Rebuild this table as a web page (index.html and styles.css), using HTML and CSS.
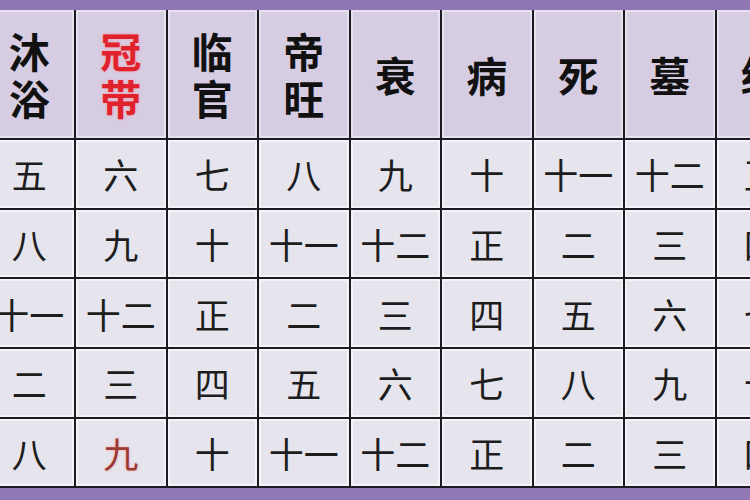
FILE: index.html
```html
<!DOCTYPE html>
<html lang="zh">
<head>
<meta charset="utf-8">
<title>十二长生表</title>
<link rel="stylesheet" href="styles.css">
</head>
<body>
<div class="band"></div>
<div class="grid">
  <div class="cell head">沐<br>浴</div>
  <div class="cell head red">冠<br>带</div>
  <div class="cell head">临<br>官</div>
  <div class="cell head">帝<br>旺</div>
  <div class="cell head">衰</div>
  <div class="cell head">病</div>
  <div class="cell head">死</div>
  <div class="cell head">墓</div>
  <div class="cell head">绝</div>

  <div class="cell">五</div><div class="cell">六</div><div class="cell">七</div><div class="cell">八</div><div class="cell">九</div><div class="cell">十</div><div class="cell">十一</div><div class="cell">十二</div><div class="cell">正</div>

  <div class="cell">八</div><div class="cell">九</div><div class="cell">十</div><div class="cell">十一</div><div class="cell">十二</div><div class="cell">正</div><div class="cell">二</div><div class="cell">三</div><div class="cell">四</div>

  <div class="cell">十一</div><div class="cell">十二</div><div class="cell">正</div><div class="cell">二</div><div class="cell">三</div><div class="cell">四</div><div class="cell">五</div><div class="cell">六</div><div class="cell">七</div>

  <div class="cell">二</div><div class="cell">三</div><div class="cell">四</div><div class="cell">五</div><div class="cell">六</div><div class="cell">七</div><div class="cell">八</div><div class="cell">九</div><div class="cell">十</div>

  <div class="cell">八</div><div class="cell red-soft">九</div><div class="cell">十</div><div class="cell">十一</div><div class="cell">十二</div><div class="cell">正</div><div class="cell">二</div><div class="cell">三</div><div class="cell">四</div>
</div>
</body>
</html>
```
FILE: styles.css
```css
html, body {
  margin: 0;
  padding: 0;
}
body {
  width: 750px;
  height: 500px;
  overflow: hidden;
  background: #9179b6;
  font-family: "Noto Sans CJK SC", "Noto Sans CJK TC", sans-serif;
}
.band {
  height: 10px;
  background: #8f76b5;
}
.grid {
  display: grid;
  grid-template-columns: repeat(9, 89.5px);
  grid-template-rows: 128px repeat(5, 67.7px);
  gap: 2px;
  margin-left: -15.5px;
  width: max-content;
  padding-bottom: 2px;
  background: #1e1a24;
}
.cell {
  box-sizing: border-box;
  border: 2px solid #f4f3f8;
  background: #e6e5ed;
  display: flex;
  align-items: center;
  justify-content: center;
  color: #1d1d1d;
  font-size: 35px;
  font-weight: 400;
  line-height: 1;
  white-space: nowrap;
}
.head {
  border-color: #e6e0ef;
  background: #d6cde3;
  font-size: 41px;
  font-weight: 700;
  line-height: 47px;
  text-align: center;
  color: #111;
}
.red {
  color: #e0222c;
  text-shadow: 0 0 3px rgba(255, 140, 150, 0.8);
}
.red-soft {
  color: #9a3a34;
  text-shadow: 0 0 3px rgba(255, 150, 150, 0.8);
}
```
